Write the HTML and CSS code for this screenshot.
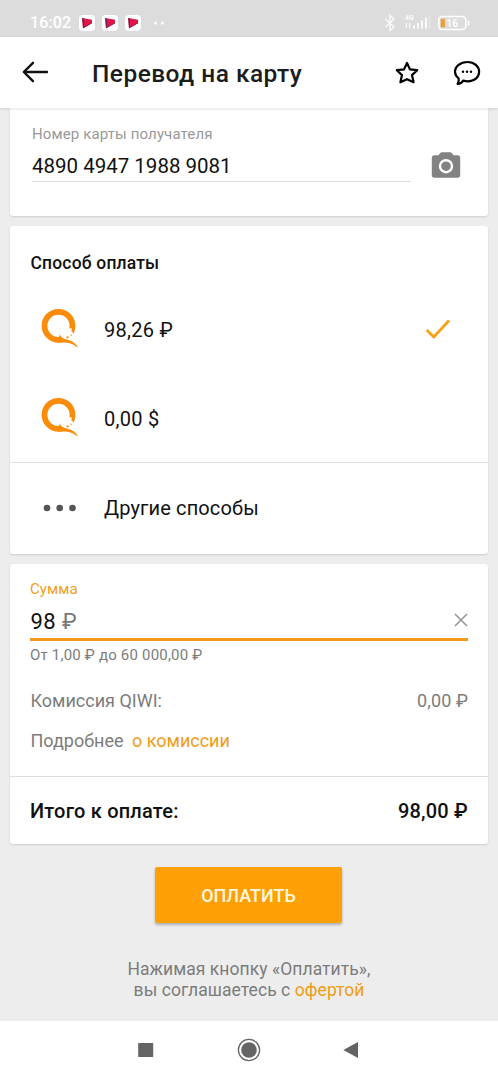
FILE: index.html
```html
<!DOCTYPE html>
<html lang="ru">
<head>
<meta charset="utf-8">
<title>Перевод на карту</title>
<link rel="stylesheet" href="styles.css">
</head>
<body>
<svg class="defs" width="0" height="0">
  <defs>
    <g id="qiwi">
      <circle cx="17.5" cy="17.8" r="14" fill="none" stroke="#fb8c0a" stroke-width="5.8"/>
      <path fill="#fff" d="M15 24L18 26L20.5 29.5C22.5 31.3 25 31.7 28.5 32.2L32.2 29C32.7 27 32.6 25.5 31.4 24L30.2 23.3L31 20.4C29.2 20.9 28 19.5 26 20C22 20 18.5 23 15 24Z"/>
      <path fill="#fb8c0a" d="M16.5 29.3C18.8 29.2 18.7 27.5 18 26C20.4 29.3 22.6 31.2 26 31.7C30.8 32.4 34.2 34.7 36.6 38.5C36.9 39.2 36.4 39.3 35.8 38.9C31.2 35.5 27.5 34.4 22.5 34.5L16.5 34.6Z"/>
      <path fill="#fb8c0a" d="M25.2 29Q26.8 27.7 27.8 29Q27.9 30.4 26.8 30.6Q25.6 30.4 25.2 29ZM29.8 26.3l1 .7-.4 1.3-1-.8Z"/>
    </g>
    <g id="play-app">
      <rect width="16" height="16" rx="4" fill="#fff"/>
      <path d="M3.2 3L13 4.8V8.2L4 13.3Z" fill="#df1748"/>
      <path d="M3.2 3L5 3.4V12.7L4 13.3Z" fill="#702052"/>
      <path d="M4 12.2L13 7.4V8.3L4.3 13.3Z" fill="#9c1744"/>
    </g>
  </defs>
</svg>
<header class="statusbar">
  <span class="clock">16:02</span>
  <svg class="apps" width="90" height="18" viewBox="0 0 90 18">
    <use href="#play-app" x="1" y="1"/><use href="#play-app" x="24" y="1"/><use href="#play-app" x="47" y="1"/>
    <circle cx="77.5" cy="9" r="1.6" fill="#fff"/><circle cx="84.5" cy="9" r="1.6" fill="#fff"/>
  </svg>
  <svg class="radio" width="48" height="18" viewBox="0 0 48 18" fill="none" stroke="#fafafa">
    <path d="M1.5 5L10 13L6 16.5V1.5L10 5L1.5 13" stroke-width="1.4"/>
    <path d="M30 14.5v-3M34 14.5V9M38 14.5V6.5M42 14.5V3.5" stroke-width="2"/>
    <path d="M45.5 14.5V2" stroke="#e8e8e8" stroke-width="1.5"/>
    <path d="M22.5 9v5M21.5 12.5l1 1.5M25.5 14V9l1.4 1.3" stroke-width="1"/>
    <text x="21" y="5.5" class="net">4G</text>
  </svg>
  <svg class="battery" width="34" height="16" viewBox="0 0 34 16">
    <rect x="1.8" y="1.5" width="27" height="13" rx="3.5" fill="none" stroke="#fff" stroke-width="1.6"/>
    <rect x="3.7" y="3.8" width="4.3" height="8.5" fill="#e4a33c"/>
    <path d="M31.5 5.5v5" stroke="#fff" stroke-width="1.4"/>
    <text x="9.2" y="12" class="charge">16</text>
  </svg>
</header>
<nav class="appbar">
  <svg class="back" width="28" height="24" viewBox="0 0 28 24" fill="none" stroke="#111" stroke-width="2.4" stroke-linecap="round" stroke-linejoin="round"><path d="M25 12H2M11 2.8L1.8 12L11 21.2"/></svg>
  <h1 class="title">Перевод на карту</h1>
  <svg class="star" width="26" height="26" viewBox="0 0 26 26" fill="none" stroke="#000" stroke-width="2.2" stroke-linejoin="round"><path d="M13 3L15.9 9.3L23.2 10.2L18 15.1L19.6 22.3L13 19.2L6.4 22.3L8 15.1L2.8 10.2L10.1 9.3Z"/></svg>
  <svg class="chat" width="28" height="26" viewBox="0 0 28 26"><path d="M14.5 2C21.3 2 26.1 6.2 26.1 11.8C26.1 17.6 21.3 21.3 14.8 21.3C12.7 21.3 11.3 20.9 10.2 20.6C8.7 22.9 6.8 24 4.6 23.8C5.6 22.2 6 20 5.6 18.3C3.2 16.4 2 14.4 2 11.8C2 6.2 7.4 2 14.5 2Z" fill="none" stroke="#000" stroke-width="2.2" stroke-linejoin="round"/><g fill="#000"><circle cx="10" cy="11.8" r="1.2"/><circle cx="14" cy="11.8" r="1.2"/><circle cx="18" cy="11.8" r="1.2"/></g></svg>
</nav>
<main class="content">
  <section class="card recipient">
    <div class="number-field">
      <label class="label">Номер карты получателя</label>
      <div class="number">4890 4947 1988 9081</div>
    </div>
    <svg class="camera" width="30" height="28" viewBox="0 0 30 28"><path d="M10.8 1.2H19.2Q20.2 1.2 20.9 2.2L22.5 4.2H26.5Q29.2 4.2 29.2 7V24Q29.2 26.7 26.5 26.7H3.5Q.8 26.7.8 24V7Q.8 4.2 3.5 4.2H7.5L9.1 2.2Q9.8 1.2 10.8 1.2Z" fill="#828282"/><circle cx="15" cy="15.2" r="6" fill="#828282" stroke="#fff" stroke-width="2.4"/></svg>
  </section>
  <section class="card methods">
    <h2 class="subtitle">Способ оплаты</h2>
    <div class="method">
      <svg class="logo" width="38" height="40" viewBox="0 0 38 40"><use href="#qiwi"/></svg>
      <span class="amount">98,26 ₽</span>
      <svg class="check" width="26" height="22" viewBox="0 0 26 22"><path d="M1.8 12L8.8 19L24 2.5" fill="none" stroke="#f5a21a" stroke-width="2.8"/></svg>
    </div>
    <div class="method">
      <svg class="logo" width="38" height="40" viewBox="0 0 38 40"><use href="#qiwi"/></svg>
      <span class="amount usd">0,00 $</span>
    </div>
    <div class="method other">
      <svg width="38" height="40" viewBox="0 0 38 40" fill="#555"><circle cx="6" cy="19" r="3.3"/><circle cx="18.7" cy="19" r="3.3"/><circle cx="31.5" cy="19" r="3.3"/></svg>
      <span class="other-text">Другие способы</span>
    </div>
  </section>
  <section class="card payment">
    <div class="payment-body">
      <label class="sum-label">Сумма</label>
      <div class="sum-field">
        <div class="sum">98 <span class="currency">₽</span></div>
        <svg width="14" height="14" viewBox="0 0 14 14"><path d="M1 1L13 13M13 1L1 13" stroke="#969696" stroke-width="1.6"/></svg>
      </div>
      <div class="hint">От 1,00 ₽ до 60 000,00 ₽</div>
      <div class="fee"><span class="fee-name">Комиссия QIWI:</span><span class="fee-value">0,00 ₽</span></div>
      <div class="details"><span class="fee-name">Подробнее</span><a class="link fee-link">о комиссии</a></div>
    </div>
    <div class="total"><span class="total-name">Итого к оплате:</span><span class="total-value">98,00 ₽</span></div>
  </section>
  <button class="pay">ОПЛАТИТЬ</button>
  <p class="terms">Нажимая кнопку «Оплатить»,<br>вы соглашаетесь с <a class="link">офертой</a></p>
</main>
<footer class="system-nav">
  <svg width="24" height="24" viewBox="0 0 24 24"><rect x="4.2" y="5" width="15" height="14" fill="#646464"/></svg>
  <svg width="24" height="24" viewBox="0 0 24 24"><circle cx="12" cy="12" r="10.6" fill="none" stroke="#646464" stroke-width="1.3"/><circle cx="12" cy="12" r="7.8" fill="#646464"/></svg>
  <svg width="24" height="24" viewBox="0 0 24 24"><path d="M4.3 12L19 4V20Z" fill="#646464"/></svg>
</footer>
</body>
</html>
```

FILE: styles.css
```css
* { box-sizing: border-box; }
body {
  margin: 0;
  width: 498px;
  height: 1080px;
  overflow: hidden;
  display: flex;
  flex-direction: column;
  background: #ededed;
  color: #111;
  font-family: Roboto, "Noto Sans", sans-serif;
}
svg { display: block; flex: none; overflow: visible; }
.defs { display: none; }
.statusbar {
  flex: none;
  display: flex;
  align-items: center;
  height: 37px;
  padding: 9px 27px 0 30px;
  background: #dcdcdc;
}
.clock { width: 48px; color: #fff; font-size: 16px; line-height: 18px; font-weight: 500; letter-spacing: .1px; white-space: nowrap; }
.radio { margin-left: auto; }
.net { font-size: 7px; fill: #fafafa; stroke: none; font-weight: 700; }
.battery { margin-left: 5px; }
.charge { font-size: 10.5px; fill: #fff; font-weight: 500; }
.appbar {
  flex: none;
  display: flex;
  align-items: center;
  height: 71px;
  padding: 0 17px 0 22px;
  background: #fff;
  box-shadow: 0 1px 3px #0002;
  z-index: 1;
}
.back { margin-bottom: 1px; }
.title { margin: 3px 0 0 42px; color: #1c1c1c; font-size: 24.5px; line-height: 30px; font-weight: 500; letter-spacing: .46px; white-space: nowrap; }
.star { margin-left: auto; }
.chat { margin-left: 33px; }
.content { display: flex; flex-direction: column; align-items: center; height: 913px; }
.card {
  flex: none;
  width: 478px;
  margin-bottom: 10px;
  background: #fff;
  border-radius: 3px;
  box-shadow: 0 1px 2px #0002;
}
.recipient { display: flex; justify-content: space-between; height: 108px; padding: 16px 27px 0 22px; border-radius: 0 0 3px 3px; }
.number-field { width: 379px; height: 58px; border-bottom: 1px solid #ddd; }
.label { display: block; color: #999; font-size: 15px; line-height: 20px; letter-spacing: .13px; }
.number { margin-top: 10px; font-size: 20.5px; line-height: 24px; }
.camera { margin-top: 27px; }
.methods { height: 328px; padding-top: 25px; }
.subtitle { margin: 0 20.5px; font-size: 17.5px; line-height: 24px; font-weight: 500; letter-spacing: .17px; }
.method { display: flex; align-items: center; height: 89px; padding: 0 37px 0 31px; font-size: 20px; }
.subtitle + .method { margin-top: 9px; }
.logo { margin-bottom: 1px; }
.amount, .other-text { margin: 0 auto 0 25px; letter-spacing: .27px; }
.amount { padding-top: 2px; }
.usd { letter-spacing: .3px; }
.other-text { letter-spacing: .13px; padding-bottom: 2px; }
.other { height: 92px; border-top: 1px solid #ddd; }
.payment { height: 280px; }
.payment-body { height: 212px; padding: 15px 20px 0; }
.sum-label { display: block; height: 20px; color: #f0a020; font-size: 15px; line-height: 20px; letter-spacing: .1px; }
.sum-field { display: flex; justify-content: space-between; align-items: center; height: 42px; padding-top: 2px; border-bottom: 3px solid #f29a1b; }
.sum { padding: 5px 0 0 .5px; font-size: 22px; line-height: 28px; letter-spacing: .4px; }
.currency { color: #777; }
.hint { margin-top: 4px; color: #7c7c7c; font-size: 15px; line-height: 20px; letter-spacing: .2px; }
.fee { display: flex; justify-content: space-between; margin-top: 24px; color: #7c7c7c; font-size: 18px; line-height: 24px; }
.fee-value { letter-spacing: .1px; }
.fee-name { padding-left: .5px; }
.details { display: flex; gap: 8.5px; margin-top: 16px; color: #7c7c7c; font-size: 18px; line-height: 24px; }
.link { color: #f29c14; }
.total { display: flex; justify-content: space-between; align-items: center; height: 68px; padding: 0 20px; border-top: 1px solid #ddd; font-size: 20px; font-weight: 500; letter-spacing: .2px; }
.pay {
  flex: none;
  width: 187px;
  height: 56px;
  margin: 13px 1px 0 0;
  padding: 2px 0 0;
  border: 0;
  border-radius: 2px;
  background: #ffa006;
  color: #fff7df;
  font: 500 18px/24px Roboto, sans-serif;
  box-shadow: 0 2px 3px #0004;
}
.terms { margin: 36px 0 0; color: #7c7c7c; font-size: 17.5px; line-height: 21px; letter-spacing: .06px; text-align: center; }
.system-nav {
  flex: none;
  display: flex;
  justify-content: space-between;
  height: 59px;
  padding: 17px 135px 0 134px;
  background: #fff;
}
```
